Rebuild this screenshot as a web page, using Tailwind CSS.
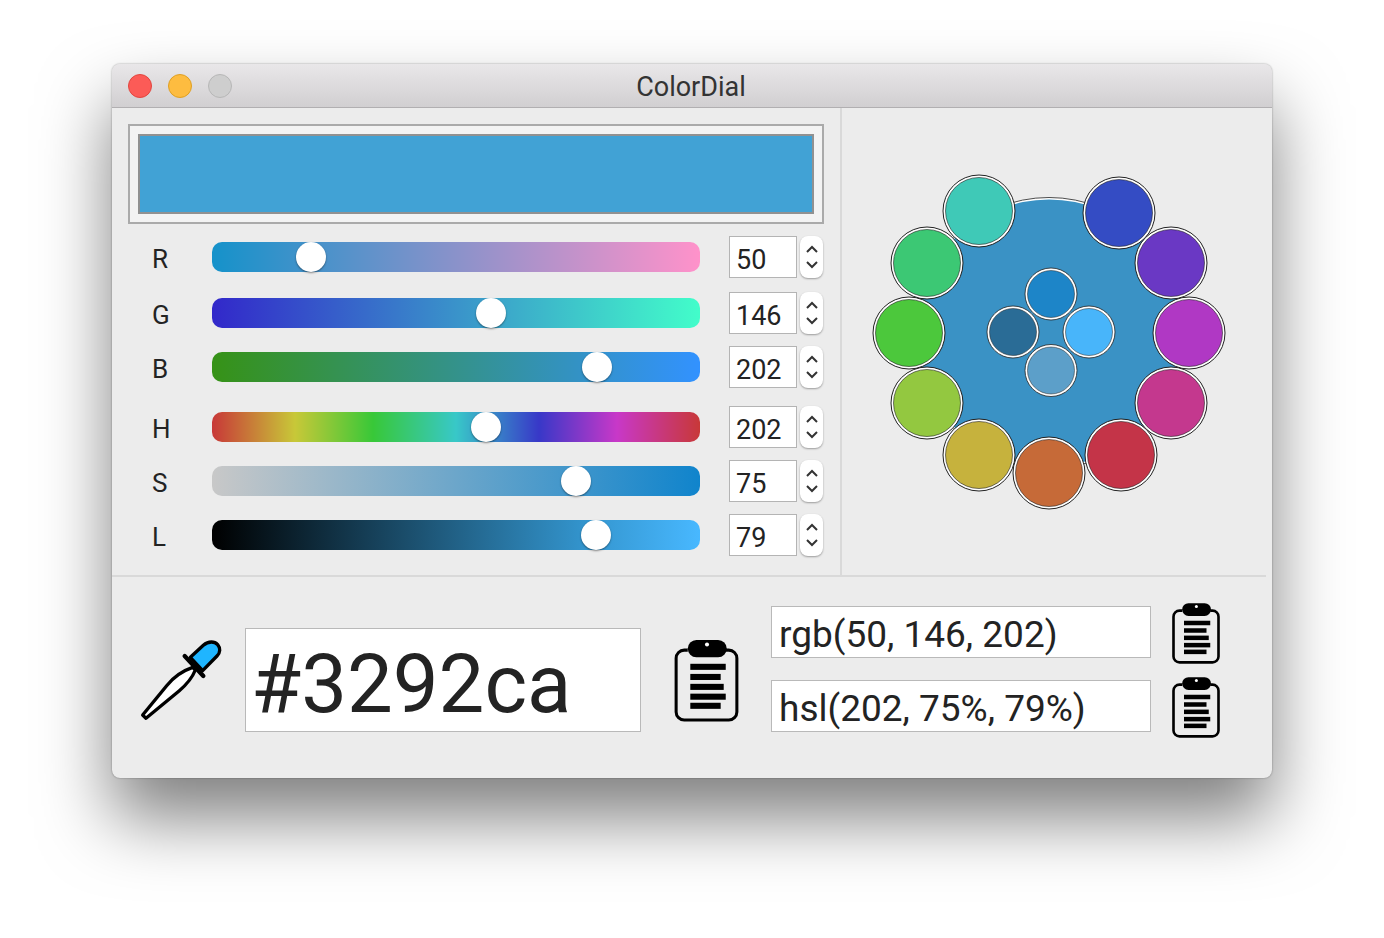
<!DOCTYPE html>
<html lang="en">

<head>
    <meta charset="UTF-8">
    <title>ColorDial</title>
    <script src="https://cdn.jsdelivr.net/npm/@tailwindcss/browser@4"></script>
</head>

<body class="m-0 w-[1384px] h-[938px] overflow-hidden bg-white pt-[64px] pl-[112px] font-['Roboto','Liberation_Sans',sans-serif] text-[#232323]">

    <div class="w-[1160px] h-[714px] rounded-[8px] overflow-hidden bg-[#ececec] flex flex-col shadow-[0_40px_70px_rgba(0,0,0,0.5),0_0_2px_rgba(0,0,0,0.4)]">

        <!-- title bar -->
        <div class="relative h-[44px] shrink-0 flex items-center pl-[16px] gap-[16px] bg-[linear-gradient(to_bottom,#e9e7e9,#d1cfd1)] border-b border-[#b1afb1]">
            <div class="w-[24px] h-[24px] rounded-full bg-[#fc5b57] border border-[#e2463f]"></div>
            <div class="w-[24px] h-[24px] rounded-full bg-[#fdbc40] border border-[#dfa023]"></div>
            <div class="w-[24px] h-[24px] rounded-full bg-[#cecece] border border-[#b7b7b7]"></div>
            <div class="absolute inset-0 flex items-center justify-center pt-[3px] pr-[2px] text-[27px] text-[#333]">ColorDial</div>
        </div>

        <!-- top panel -->
        <div class="flex h-[468px] shrink-0">
            <div class="w-[728px] pt-[16px] pl-[16px]">
                <div class="w-[696px] h-[100px] border-2 border-[#aaaaaa] bg-[#f3f3f3] p-[8px]">
                    <div class="h-full border-2 border-[#919191] bg-[#41a2d5]"></div>
                </div>

                <div class="flex items-center h-[42px] mt-[12px]">
                    <div class="w-[84px] pl-[24px] pt-[4px] text-[26px]">R</div>
                    <div class="relative w-[488px] h-[30px] rounded-[10px] bg-[linear-gradient(to_right,#1592ca,#ff92ca)]">
                        <div class="absolute top-0 left-[84px] w-[30px] h-[30px] rounded-full bg-white shadow-[0_1px_2px_rgba(0,0,0,0.45)]"></div>
                    </div>
                    <div class="ml-[29px] w-[68px] h-[42px] bg-white border border-[#b4b4b4] pl-[6px] text-[27px] leading-[47px]">50</div>
                    <div class="ml-[3px] w-[23px] h-[42px] rounded-[8px] bg-white shadow-[0_1px_2px_rgba(0,0,0,0.35)] flex flex-col items-center justify-center gap-[8px]">
                        <svg width="12" height="8" viewBox="0 0 12 8" fill="none" stroke="#333" stroke-width="2"><path d="M1 7l5-5 5 5"/></svg>
                        <svg width="12" height="8" viewBox="0 0 12 8" fill="none" stroke="#333" stroke-width="2"><path d="M1 1l5 5 5-5"/></svg>
                    </div>
                </div>

                <div class="flex items-center h-[42px] mt-[14px]">
                    <div class="w-[84px] pl-[24px] pt-[4px] text-[26px]">G</div>
                    <div class="relative w-[488px] h-[30px] rounded-[10px] bg-[linear-gradient(to_right,#3228ca,#42fdca)]">
                        <div class="absolute top-0 left-[264px] w-[30px] h-[30px] rounded-full bg-white shadow-[0_1px_2px_rgba(0,0,0,0.45)]"></div>
                    </div>
                    <div class="ml-[29px] w-[68px] h-[42px] bg-white border border-[#b4b4b4] pl-[6px] text-[27px] leading-[47px]">146</div>
                    <div class="ml-[3px] w-[23px] h-[42px] rounded-[8px] bg-white shadow-[0_1px_2px_rgba(0,0,0,0.35)] flex flex-col items-center justify-center gap-[8px]">
                        <svg width="12" height="8" viewBox="0 0 12 8" fill="none" stroke="#333" stroke-width="2"><path d="M1 7l5-5 5 5"/></svg>
                        <svg width="12" height="8" viewBox="0 0 12 8" fill="none" stroke="#333" stroke-width="2"><path d="M1 1l5 5 5-5"/></svg>
                    </div>
                </div>

                <div class="flex items-center h-[42px] mt-[12px]">
                    <div class="w-[84px] pl-[24px] pt-[4px] text-[26px]">B</div>
                    <div class="relative w-[488px] h-[30px] rounded-[10px] bg-[linear-gradient(to_right,#369216,#3292ff)]">
                        <div class="absolute top-0 left-[370px] w-[30px] h-[30px] rounded-full bg-white shadow-[0_1px_2px_rgba(0,0,0,0.45)]"></div>
                    </div>
                    <div class="ml-[29px] w-[68px] h-[42px] bg-white border border-[#b4b4b4] pl-[6px] text-[27px] leading-[47px]">202</div>
                    <div class="ml-[3px] w-[23px] h-[42px] rounded-[8px] bg-white shadow-[0_1px_2px_rgba(0,0,0,0.35)] flex flex-col items-center justify-center gap-[8px]">
                        <svg width="12" height="8" viewBox="0 0 12 8" fill="none" stroke="#333" stroke-width="2"><path d="M1 7l5-5 5 5"/></svg>
                        <svg width="12" height="8" viewBox="0 0 12 8" fill="none" stroke="#333" stroke-width="2"><path d="M1 1l5 5 5-5"/></svg>
                    </div>
                </div>

                <div class="flex items-center h-[42px] mt-[18px]">
                    <div class="w-[84px] pl-[24px] pt-[4px] text-[26px]">H</div>
                    <div class="relative w-[488px] h-[30px] rounded-[10px] bg-[linear-gradient(to_right,#c83838,#c8c838_17%,#38c838_33%,#38c8c8_50%,#3838c8_67%,#c838c8_83%,#c83838)]">
                        <div class="absolute top-0 left-[259px] w-[30px] h-[30px] rounded-full bg-white shadow-[0_1px_2px_rgba(0,0,0,0.45)]"></div>
                    </div>
                    <div class="ml-[29px] w-[68px] h-[42px] bg-white border border-[#b4b4b4] pl-[6px] text-[27px] leading-[47px]">202</div>
                    <div class="ml-[3px] w-[23px] h-[42px] rounded-[8px] bg-white shadow-[0_1px_2px_rgba(0,0,0,0.35)] flex flex-col items-center justify-center gap-[8px]">
                        <svg width="12" height="8" viewBox="0 0 12 8" fill="none" stroke="#333" stroke-width="2"><path d="M1 7l5-5 5 5"/></svg>
                        <svg width="12" height="8" viewBox="0 0 12 8" fill="none" stroke="#333" stroke-width="2"><path d="M1 1l5 5 5-5"/></svg>
                    </div>
                </div>

                <div class="flex items-center h-[42px] mt-[12px]">
                    <div class="w-[84px] pl-[24px] pt-[4px] text-[26px]">S</div>
                    <div class="relative w-[488px] h-[30px] rounded-[10px] bg-[linear-gradient(to_right,#c8c8c8,#1084cc)]">
                        <div class="absolute top-0 left-[349px] w-[30px] h-[30px] rounded-full bg-white shadow-[0_1px_2px_rgba(0,0,0,0.45)]"></div>
                    </div>
                    <div class="ml-[29px] w-[68px] h-[42px] bg-white border border-[#b4b4b4] pl-[6px] text-[27px] leading-[47px]">75</div>
                    <div class="ml-[3px] w-[23px] h-[42px] rounded-[8px] bg-white shadow-[0_1px_2px_rgba(0,0,0,0.35)] flex flex-col items-center justify-center gap-[8px]">
                        <svg width="12" height="8" viewBox="0 0 12 8" fill="none" stroke="#333" stroke-width="2"><path d="M1 7l5-5 5 5"/></svg>
                        <svg width="12" height="8" viewBox="0 0 12 8" fill="none" stroke="#333" stroke-width="2"><path d="M1 1l5 5 5-5"/></svg>
                    </div>
                </div>

                <div class="flex items-center h-[42px] mt-[12px]">
                    <div class="w-[84px] pl-[24px] pt-[4px] text-[26px]">L</div>
                    <div class="relative w-[488px] h-[30px] rounded-[10px] bg-[linear-gradient(to_right,#000000,#3292ca_75%,#48b8ff)]">
                        <div class="absolute top-0 left-[369px] w-[30px] h-[30px] rounded-full bg-white shadow-[0_1px_2px_rgba(0,0,0,0.45)]"></div>
                    </div>
                    <div class="ml-[29px] w-[68px] h-[42px] bg-white border border-[#b4b4b4] pl-[6px] text-[27px] leading-[47px]">79</div>
                    <div class="ml-[3px] w-[23px] h-[42px] rounded-[8px] bg-white shadow-[0_1px_2px_rgba(0,0,0,0.35)] flex flex-col items-center justify-center gap-[8px]">
                        <svg width="12" height="8" viewBox="0 0 12 8" fill="none" stroke="#333" stroke-width="2"><path d="M1 7l5-5 5 5"/></svg>
                        <svg width="12" height="8" viewBox="0 0 12 8" fill="none" stroke="#333" stroke-width="2"><path d="M1 1l5 5 5-5"/></svg>
                    </div>
                </div>
            </div>

            <!-- colour wheel -->
            <div class="w-[432px] border-l-2 border-[#d9d9d9] mb-[-1px]">
                <svg width="430" height="468" viewBox="842 108 430 468">
                    <g stroke="#222" stroke-width="0.8">
                        <circle cx="1049" cy="333" r="135.500" fill="#fff"/>
                        <circle cx="1049" cy="333" r="133.500" fill="#3a92c5" stroke="none"/>
                    </g>
                    <g fill="#fff" stroke="#222" stroke-width="1">
                        <circle cx="979" cy="211" r="36"/>
                        <circle cx="1119" cy="213" r="36"/>
                        <circle cx="1171" cy="263" r="36"/>
                        <circle cx="1189" cy="333" r="36"/>
                        <circle cx="1171" cy="403" r="36"/>
                        <circle cx="1121" cy="455" r="36"/>
                        <circle cx="979" cy="455" r="36"/>
                        <circle cx="1049" cy="473" r="36"/>
                        <circle cx="927" cy="403" r="36"/>
                        <circle cx="909" cy="333" r="36"/>
                        <circle cx="927" cy="263" r="36"/>
                    </g>
                    <g stroke="#222" stroke-width="0.6">
                        <circle cx="979" cy="211" r="33.500" fill="#3fc9b7"/>
                        <circle cx="1119" cy="213" r="33.500" fill="#344cc4"/>
                        <circle cx="1171" cy="263" r="33.500" fill="#6a38c4"/>
                        <circle cx="1189" cy="333" r="33.500" fill="#b038c4"/>
                        <circle cx="1171" cy="403" r="33.500" fill="#c4388e"/>
                        <circle cx="1121" cy="455" r="33.500" fill="#c43448"/>
                        <circle cx="979" cy="455" r="33.500" fill="#c6b23d"/>
                        <circle cx="1049" cy="473" r="33.500" fill="#c66a38"/>
                        <circle cx="927" cy="403" r="33.500" fill="#93c840"/>
                        <circle cx="909" cy="333" r="33.500" fill="#4cc83c"/>
                        <circle cx="927" cy="263" r="33.500" fill="#3cc874"/>
                    </g>
                    <g fill="#fff" stroke="#222" stroke-width="0.8">
                        <circle cx="1051" cy="294" r="26"/>
                        <circle cx="1013" cy="332" r="26"/>
                        <circle cx="1089" cy="332" r="26"/>
                        <circle cx="1051" cy="370.500" r="26"/>
                    </g>
                    <g stroke="#222" stroke-width="0.5">
                        <circle cx="1051" cy="294" r="23.500" fill="#1d85c8"/>
                        <circle cx="1013" cy="332" r="23.500" fill="#2a6c96"/>
                        <circle cx="1089" cy="332" r="23.500" fill="#48b5fa"/>
                        <circle cx="1051" cy="370.500" r="23.500" fill="#5c9fc9"/>
                    </g>
                </svg>
            </div>
        </div>

        <div class="w-[1154px] h-[2px] shrink-0 bg-[#d9d9d9] -mt-[1px]"></div>

        <!-- bottom panel -->
        <div class="flex items-center pl-[28px] flex-1">
            <svg class="shrink-0 mt-[6px]" width="90" height="90" viewBox="60 48 270 270" fill="none" stroke="#000" stroke-width="10" stroke-linecap="round" stroke-linejoin="round">
                <path d="M218 142C180 155 160 172 140 197L68 285 78 295 178 212C204 190 216 175 226 150Z" fill="#fff"/>
                <path d="M211 112L250 76C266 62 284 64 293 74C302 85 301 98 291 108L248 152Z" fill="#1fb5ff"/>
                <path d="M194 108L250 168" stroke-width="13"/>
            </svg>
            <div class="ml-[15px] w-[396px] h-[104px] bg-white border border-[#b9b9b9] pl-[5px] text-[81.5px] leading-[110px] mt-[4px] shrink-0">#3292ca</div>
            <svg class="ml-[33px] shrink-0 mt-[6px]" width="65" height="82" viewBox="0 0 64 81">
                <path d="M13.500 10H10a8 8 0 0 0-8 8V71a8 8 0 0 0 8 8H54a8 8 0 0 0 8-8V18a8 8 0 0 0-8-8H51" fill="none" stroke="#000" stroke-width="3"/>
                <rect x="13.500" y="0" width="38.500" height="17" rx="8.500"/>
                <circle cx="32.500" cy="4.500" r="2" fill="#fff"/>
                <rect x="16" y="23.500" width="35" height="6"/>
                <rect x="16" y="33.500" width="30" height="6"/>
                <rect x="16" y="43.300" width="33" height="6"/>
                <rect x="16" y="53" width="35" height="6"/>
                <rect x="16" y="62" width="30" height="6"/>
            </svg>
            <div class="ml-[32px] flex flex-col gap-[13px] shrink-0 -mt-[14px]">
                <div class="flex items-center">
                    <div class="w-[380px] h-[52px] mb-[3px] bg-white border border-[#b9b9b9] pl-[7px] text-[37px] leading-[56px]">rgb(50, 146, 202)</div>
                    <svg class="ml-[21px]" width="48" height="61" viewBox="0 0 64 81">
                        <path d="M13.500 10H10a8 8 0 0 0-8 8V71a8 8 0 0 0 8 8H54a8 8 0 0 0 8-8V18a8 8 0 0 0-8-8H51" fill="none" stroke="#000" stroke-width="3.500"/>
                        <rect x="13.500" y="0" width="38.500" height="17" rx="8.500"/>
                        <circle cx="32.500" cy="4.500" r="2" fill="#fff"/>
                        <rect x="16" y="23.500" width="35" height="6"/>
                        <rect x="16" y="33.500" width="30" height="6"/>
                        <rect x="16" y="43.300" width="33" height="6"/>
                        <rect x="16" y="53" width="35" height="6"/>
                        <rect x="16" y="62" width="30" height="6"/>
                    </svg>
                </div>
                <div class="flex items-center">
                    <div class="w-[380px] h-[52px] mb-[3px] bg-white border border-[#b9b9b9] pl-[7px] text-[37px] leading-[56px]">hsl(202, 75%, 79%)</div>
                    <svg class="ml-[21px]" width="48" height="61" viewBox="0 0 64 81">
                        <path d="M13.500 10H10a8 8 0 0 0-8 8V71a8 8 0 0 0 8 8H54a8 8 0 0 0 8-8V18a8 8 0 0 0-8-8H51" fill="none" stroke="#000" stroke-width="3.500"/>
                        <rect x="13.500" y="0" width="38.500" height="17" rx="8.500"/>
                        <circle cx="32.500" cy="4.500" r="2" fill="#fff"/>
                        <rect x="16" y="23.500" width="35" height="6"/>
                        <rect x="16" y="33.500" width="30" height="6"/>
                        <rect x="16" y="43.300" width="33" height="6"/>
                        <rect x="16" y="53" width="35" height="6"/>
                        <rect x="16" y="62" width="30" height="6"/>
                    </svg>
                </div>
            </div>
        </div>
    </div>

</body>

</html>
